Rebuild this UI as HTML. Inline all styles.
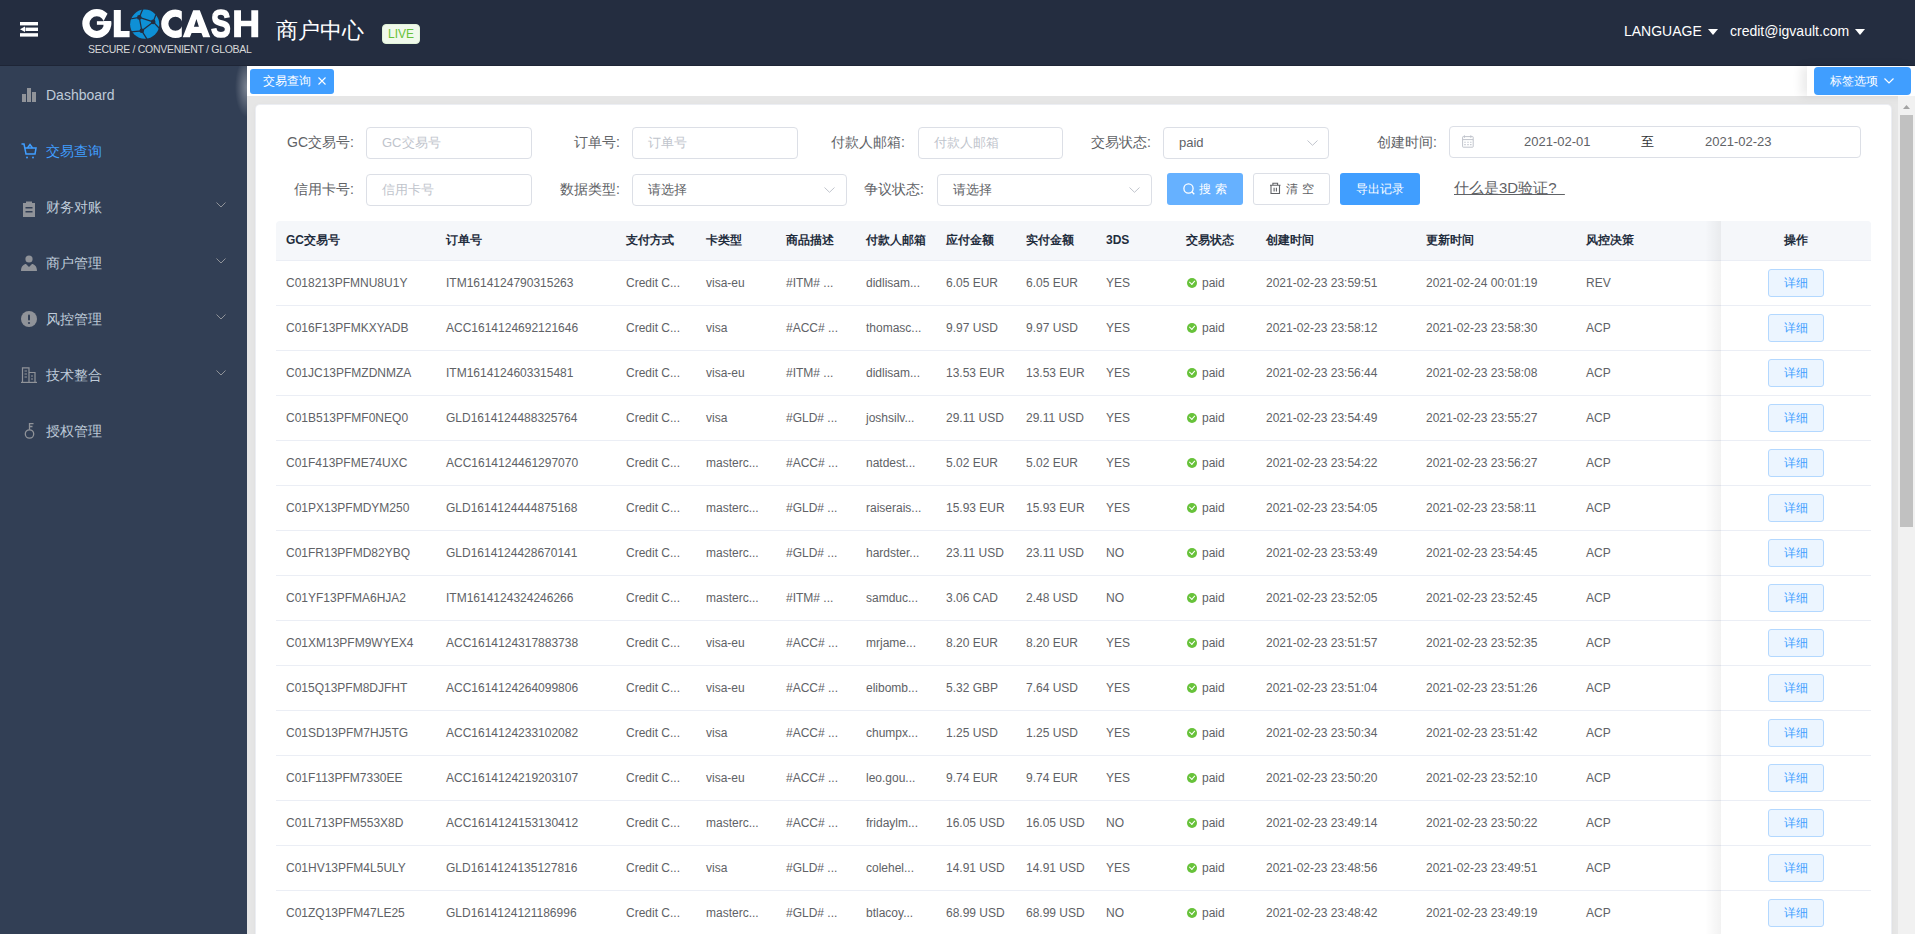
<!DOCTYPE html>
<html><head><meta charset="utf-8">
<style>
*{box-sizing:border-box;margin:0;padding:0}
html,body{width:1915px;height:934px;overflow:hidden;font-family:"Liberation Sans",sans-serif;background:#e6e6e6}
.abs{position:absolute}
#hd{position:absolute;left:0;top:0;width:1915px;height:66px;background:#242d40;border-bottom:1px solid #1e2536}
#sb{position:absolute;left:0;top:66px;width:247px;height:868px;background:#323f55}
.mi{position:absolute;left:0;width:247px;height:56px}
.mi .t{position:absolute;left:46px;top:0;line-height:56px;font-size:14px;color:#bfcbd9;white-space:nowrap}
.mi svg.ic{position:absolute}
.mi svg.ar{position:absolute;left:216px;top:23px}
#tb{position:absolute;left:247px;top:66px;width:1668px;height:30px;background:#fff}
#glow{position:absolute;left:235px;top:66px;width:12px;height:56px;background:radial-gradient(ellipse 12px 30px at 100% 38%,rgba(255,255,255,.36),rgba(255,255,255,0))}
.tag{position:absolute;left:3px;top:3px;width:84px;height:25px;background:#409eff;border-radius:3px;color:#fff;font-size:12px;line-height:25px;padding-left:13px;white-space:nowrap}
#tabopt{position:absolute;left:1807px;top:66px;width:108px;height:30px;background:#fff;box-shadow:-6px 0 10px rgba(0,0,0,.08)}
#tabopt .b{position:absolute;left:7px;top:1px;width:97px;height:28px;background:#409eff;border-radius:4px;color:#fff;font-size:12px;line-height:28px;padding-left:16px;white-space:nowrap}
#card{position:absolute;left:256px;top:105px;width:1635px;height:900px;background:#fff;border-radius:4px;box-shadow:0 0 0 1px #eceef3,0 1px 6px rgba(0,0,0,.05)}
.lbl{position:absolute;font-size:14px;color:#606266;line-height:30px;text-align:right;white-space:nowrap}
.inp{position:absolute;height:32px;border:1px solid #dcdfe6;border-radius:4px;background:#fff;font-size:13px;line-height:29px;padding-left:15px;color:#c0c4cc;white-space:nowrap}
.inp.v{color:#606266}
.inp svg.ch{position:absolute;top:12px}
.btn{position:absolute;height:32px;border-radius:3px;font-size:12px;line-height:32px;white-space:nowrap;text-align:center}
#sbar{position:absolute;left:1898px;top:96px;width:17px;height:838px;background:#f1f1f1}
#tbl{position:absolute;left:20px;top:116px;width:1595px;height:800px}
.thd{position:absolute;left:0;top:0;width:1595px;height:40px;background:#f5f7fa;border-bottom:1px solid #ebeef5;border-radius:4px 4px 0 0}
.h{position:absolute;top:0;line-height:39px;font-size:12px;font-weight:bold;color:#1f2d3d;white-space:nowrap}
.tr{position:absolute;left:0;width:1595px;height:45px;border-bottom:1px solid #ebeef5}
.c{position:absolute;top:0;line-height:44px;font-size:12px;color:#606266;white-space:nowrap}
.ok{display:inline-block;width:10.6px;height:10.6px;border-radius:50%;background:#67c23a;margin-left:0.7px;margin-right:4.7px;vertical-align:-1.3px;position:relative}
.ok:after{content:"";position:absolute;left:3.7px;top:1.7px;width:2.6px;height:4.4px;border:solid #fff;border-width:0 1.1px 1.1px 0;transform:rotate(42deg)}
.fx{position:absolute;left:1445px;top:0;width:150px;height:44px;background:#fff}
.fxh{position:absolute;left:1445px;top:0;width:150px;height:39px;background:#f5f7fa;border-radius:0 4px 0 0}
.shadow{position:absolute;left:1429px;top:0;width:16px;height:800px;background:linear-gradient(to right,rgba(0,0,0,0),rgba(0,0,0,.05))}
.btn-d{position:absolute;left:47px;top:8px;width:56px;height:28px;background:#ecf5ff;border:1px solid #b3d8ff;border-radius:3px;color:#409eff;font-size:12px;line-height:26px;text-align:center}
</style></head>
<body>
<div id="hd">
  <svg class="abs" style="left:20px;top:22px" width="18" height="15" viewBox="0 0 18 15">
    <rect x="0" y="0" width="18" height="3.4" fill="#fff"/>
    <rect x="5.5" y="5.6" width="12.5" height="3.4" fill="#fff"/>
    <path d="M0 7.3 L5 4.6 L5 10 Z" fill="#fff"/>
    <rect x="0" y="11.2" width="18" height="3.4" fill="#fff"/>
  </svg>
  <svg class="abs" style="left:0;top:0" width="270" height="60" viewBox="0 0 270 60">
    <defs>
      <mask id="mg" maskUnits="userSpaceOnUse" x="0" y="0" width="270" height="60"><rect x="0" y="0" width="270" height="60" fill="#fff"/><polygon points="103.5,21.2 107.2,14.2 120,6 120,21.2" fill="#000"/></mask>
      <clipPath id="cc"><rect x="150" y="0" width="31.8" height="60"/></clipPath>
    </defs>
    <circle cx="96.8" cy="23.6" r="10.9" fill="none" stroke="#fff" stroke-width="7.2" mask="url(#mg)"/>
    <rect x="96.9" y="21.2" width="14.2" height="3.6" fill="#fff"/>
    <rect x="103.6" y="21.2" width="7.5" height="5" fill="#fff"/>
    <path d="M113.8 9.9 H120.8 V31 H129.6 V37.2 H113.8 Z" fill="#fff"/>
    <circle cx="175.4" cy="23.8" r="10.6" fill="none" stroke="#fff" stroke-width="7.2" clip-path="url(#cc)"/>
    <path fill-rule="evenodd" d="M182.7 37.2 L193.2 10.2 L199.8 10.2 L210.3 37.2 L203.1 37.2 L201.4 32.9 L191.6 32.9 L189.9 37.2 Z M196.4 19 L198.9 26.8 L193.9 26.8 Z" fill="#fff"/>
    <path d="M234.1 10.2 H241 V20.8 H251.3 V10.2 H258.2 V37.2 H251.3 V26.3 H241 V37.2 H234.1 Z" fill="#fff"/>
    <g transform="translate(130,9.5)">
      <circle cx="14.7" cy="14.7" r="14.6" fill="#0e90d6"/>
      <g stroke="#242d40" stroke-width="1.25" fill="none" stroke-linecap="round">
        <path d="M9.3 7.9 L12.6 0 M9.3 7.9 L0 9.5 M9.3 7.9 L23.2 12.4 M9.3 7.9 L11.8 21.3 M23.2 12.4 L25.8 5.5 M23.2 12.4 L28.8 18.3 M11.8 21.3 L1 22.4 M11.8 21.3 L17 29.6 M11.8 21.3 L23.2 12.4"/>
      </g>
      <g fill="#242d40"><circle cx="9.3" cy="7.9" r="2.3"/><circle cx="23.2" cy="12.4" r="2.3"/><circle cx="11.8" cy="21.3" r="2.3"/></g>
    </g>
  </svg>
  <div class="abs" style="left:211.4px;top:1px;font-size:39.5px;font-weight:bold;color:#fff;line-height:44px;-webkit-text-stroke:1.6px #fff;transform:scaleX(0.75);transform-origin:0 0">S</div>
  <div class="abs" style="left:88px;top:42px;font-size:10.5px;color:#d8d8d8;line-height:14px;letter-spacing:-0.3px;white-space:nowrap">SECURE / CONVENIENT / GLOBAL</div>
  <div class="abs" style="left:276px;top:15px;font-size:22px;color:#fff;line-height:32px;white-space:nowrap">商户中心</div>
  <div class="abs" style="left:382px;top:24px;width:38px;height:20px;background:#f0f9eb;border:1px solid #e1f3d8;border-radius:4px;color:#67c23a;font-size:12px;line-height:18px;text-align:center">LIVE</div>
  <div class="abs" style="left:1624px;top:21px;font-size:14px;color:#fff;line-height:20px;white-space:nowrap">LANGUAGE</div>
  <svg class="abs" style="left:1708px;top:29px" width="10" height="6" viewBox="0 0 10 6"><path d="M0 0 L10 0 L5 6 Z" fill="#fff"/></svg>
  <div class="abs" style="left:1730px;top:21px;font-size:14px;color:#fff;line-height:20px;white-space:nowrap">credit@igvault.com</div>
  <svg class="abs" style="left:1855px;top:29px" width="10" height="6" viewBox="0 0 10 6"><path d="M0 0 L10 0 L5 6 Z" fill="#fff"/></svg>
</div>

<div id="sb">
  <div class="mi" style="top:1px">
    <svg class="ic" style="left:22px;top:21px" width="14" height="14" viewBox="0 0 14 14"><rect x="0" y="6" width="4" height="8" fill="#909399"/><rect x="5" y="0" width="4" height="14" fill="#909399"/><rect x="10" y="4" width="4" height="10" fill="#909399"/></svg>
    <span class="t">Dashboard</span>
  </div>
  <div class="mi" style="top:57px">
    <svg class="ic" style="left:21px;top:20px" width="16" height="16" viewBox="0 0 16 16" fill="none" stroke="#409eff" stroke-width="1.5"><path d="M0.5 1 L3 1 L5 11 L14 11 L15 5 L4 5"/><path d="M6.5 5 L9 1.5 L11.5 5"/><circle cx="6" cy="14.5" r="1" fill="#409eff" stroke="none"/><circle cx="12" cy="14.5" r="1" fill="#409eff" stroke="none"/></svg>
    <span class="t" style="color:#409eff">交易查询</span>
  </div>
  <div class="mi" style="top:113px">
    <svg class="ic" style="left:22px;top:22px" width="14" height="16" viewBox="0 0 14 16"><path d="M1 2 H4 V0.5 H10 V2 H13 V16 H1 Z" fill="#909399"/><rect x="3.5" y="6" width="7" height="1.5" fill="#323f55"/><rect x="3.5" y="10" width="7" height="1.5" fill="#323f55"/></svg>
    <span class="t">财务对账</span>
    <svg class="ar" width="10" height="6" viewBox="0 0 10 6"><path d="M0.5 0.5 L5 5 L9.5 0.5" fill="none" stroke="#909399" stroke-width="1"/></svg>
  </div>
  <div class="mi" style="top:169px">
    <svg class="ic" style="left:21px;top:20px" width="16" height="16" viewBox="0 0 16 16"><circle cx="8" cy="4" r="3.6" fill="#909399"/><path d="M0 16 C0 11 3 9 5 9 L8 12 L11 9 C13 9 16 11 16 16 Z" fill="#909399"/></svg>
    <span class="t">商户管理</span>
    <svg class="ar" width="10" height="6" viewBox="0 0 10 6"><path d="M0.5 0.5 L5 5 L9.5 0.5" fill="none" stroke="#909399" stroke-width="1"/></svg>
  </div>
  <div class="mi" style="top:225px">
    <svg class="ic" style="left:21px;top:20px" width="16" height="16" viewBox="0 0 16 16"><circle cx="8" cy="8" r="8" fill="#909399"/><rect x="7" y="3.5" width="2" height="6" rx="1" fill="#323f55"/><circle cx="8" cy="12" r="1.1" fill="#323f55"/></svg>
    <span class="t">风控管理</span>
    <svg class="ar" width="10" height="6" viewBox="0 0 10 6"><path d="M0.5 0.5 L5 5 L9.5 0.5" fill="none" stroke="#909399" stroke-width="1"/></svg>
  </div>
  <div class="mi" style="top:281px">
    <svg class="ic" style="left:21px;top:20px" width="16" height="16" viewBox="0 0 16 16" fill="none" stroke="#909399" stroke-width="1.2"><path d="M0 15.4 H16"/><path d="M1.5 15.4 V0.8 H8 V15.4"/><path d="M8 5.5 H14 V15.4"/><path d="M3.5 4 H6 M3.5 7 H6 M3.5 10 H6 M10 9 H12 M10 12 H12"/></svg>
    <span class="t">技术整合</span>
    <svg class="ar" width="10" height="6" viewBox="0 0 10 6"><path d="M0.5 0.5 L5 5 L9.5 0.5" fill="none" stroke="#909399" stroke-width="1"/></svg>
  </div>
  <div class="mi" style="top:337px">
    <svg class="ic" style="left:24px;top:20px" width="11" height="16" viewBox="0 0 11 16" fill="none" stroke="#909399" stroke-width="1.3"><circle cx="5.5" cy="11" r="4.2"/><path d="M5.5 6.8 V0.7 H9.5 M5.5 3.5 H8.5"/></svg>
    <span class="t">授权管理</span>
  </div>
</div>

<div id="glow"></div>
<div id="tb">
  <div class="tag">交易查询<svg style="position:absolute;left:68px;top:7.5px" width="8" height="8" viewBox="0 0 8 8"><path d="M0.5 0.5 L7.5 7.5 M7.5 0.5 L0.5 7.5" stroke="#fff" stroke-width="1.1"/></svg></div>
</div>
<div id="tabopt"><div class="b">标签选项<svg style="position:absolute;left:70px;top:11px" width="10" height="6" viewBox="0 0 10 6"><path d="M0.5 0.5 L5 5 L9.5 0.5" fill="none" stroke="#fff" stroke-width="1.2"/></svg></div></div>

<div id="sbar">
  <svg class="abs" style="left:5px;top:9px" width="7" height="4" viewBox="0 0 7 4"><path d="M0 4 L3.5 0 L7 4 Z" fill="#a3a3a3"/></svg>
  <div class="abs" style="left:2px;top:19px;width:13px;height:412px;background:#c1c1c1"></div>
</div>

<div id="card">
  <!-- row 1 -->
  <div class="lbl" style="left:0;width:98px;top:22px">GC交易号:</div>
  <div class="inp" style="left:110px;top:22px;width:166px">GC交易号</div>
  <div class="lbl" style="left:276px;width:88px;top:22px">订单号:</div>
  <div class="inp" style="left:376px;top:22px;width:166px">订单号</div>
  <div class="lbl" style="left:542px;width:107px;top:22px">付款人邮箱:</div>
  <div class="inp" style="left:662px;top:22px;width:145px">付款人邮箱</div>
  <div class="lbl" style="left:807px;width:88px;top:22px">交易状态:</div>
  <div class="inp v" style="left:907px;top:22px;width:166px">paid<svg class="ch" style="left:143px" width="11" height="6" viewBox="0 0 11 6"><path d="M0.5 0.5 L5.5 5.3 L10.5 0.5" fill="none" stroke="#c0c4cc" stroke-width="1"/></svg></div>
  <div class="lbl" style="left:1073px;width:108px;top:22px">创建时间:</div>
  <div class="inp v" style="left:1193px;top:21px;width:412px;padding:0">
    <svg class="abs" style="left:11px;top:8px" width="14" height="14" viewBox="0 0 14 14" fill="none" stroke="#c0c4cc" stroke-width="1"><rect x="1.6" y="1.6" width="10.6" height="10.6" rx="0.6"/><path d="M1.6 4.6 H12.2 M3.4 0.3 V2.8 M9.8 0.3 V2.8"/><path d="M3.3 7.3 H4.7 M6.3 7.3 H7.7 M9.1 7.3 H10.5 M3.3 9.6 H4.7 M6.3 9.6 H7.7 M9.1 9.6 H10.5" stroke-width="1.1"/></svg>
    <span class="abs" style="left:74px;top:0;line-height:30px">2021-02-01</span>
    <span class="abs" style="left:191px;top:0;line-height:30px;color:#303133">至</span>
    <span class="abs" style="left:255px;top:0;line-height:30px">2021-02-23</span>
  </div>
  <!-- row 2 -->
  <div class="lbl" style="left:0;width:98px;top:69px">信用卡号:</div>
  <div class="inp" style="left:110px;top:69px;width:166px">信用卡号</div>
  <div class="lbl" style="left:276px;width:88px;top:69px">数据类型:</div>
  <div class="inp v" style="left:376px;top:69px;width:215px">请选择<svg class="ch" style="left:191px" width="11" height="6" viewBox="0 0 11 6"><path d="M0.5 0.5 L5.5 5.3 L10.5 0.5" fill="none" stroke="#c0c4cc" stroke-width="1"/></svg></div>
  <div class="lbl" style="left:591px;width:77px;top:69px">争议状态:</div>
  <div class="inp v" style="left:681px;top:69px;width:215px">请选择<svg class="ch" style="left:191px" width="11" height="6" viewBox="0 0 11 6"><path d="M0.5 0.5 L5.5 5.3 L10.5 0.5" fill="none" stroke="#c0c4cc" stroke-width="1"/></svg></div>
  <div class="btn" style="left:911px;top:68px;width:76px;background:#66b1ff;color:#fff">
    <svg class="abs" style="left:16px;top:10px" width="12" height="12" viewBox="0 0 12 12" fill="none" stroke="#fff" stroke-width="1.3"><circle cx="5.5" cy="5.5" r="4.6"/><path d="M8.8 8.8 L11.3 11.3"/></svg>
    <span class="abs" style="left:32px;top:0;letter-spacing:4px">搜索</span></div>
  <div class="btn" style="left:997px;top:68px;width:77px;background:#fff;border:1px solid #dcdfe6;color:#606266;line-height:30px">
    <svg class="abs" style="left:15px;top:8px" width="12" height="13" viewBox="0 0 12 13" fill="none" stroke="#606266" stroke-width="1.1"><path d="M1 3.3 H11.5 M3.9 3.3 V1.2 H8.6 V3.3 M2 3.3 V11.5 H10.5 V3.3 M5.1 5.8 V9.6 M7.4 5.8 V9.6"/></svg>
    <span class="abs" style="left:32px;top:0;letter-spacing:4px">清空</span></div>
  <div class="btn" style="left:1084px;top:68px;width:80px;background:#409eff;color:#fff">导出记录</div>
  <div class="abs" style="left:1198px;top:67px;font-size:15px;line-height:32px;color:#606266;text-decoration:underline;white-space:nowrap">什么是3D验证?&nbsp;&nbsp;</div>

  <div id="tbl">
    <div class="thd"><span class="h" style="left:10px">GC交易号</span><span class="h" style="left:170px">订单号</span><span class="h" style="left:350px">支付方式</span><span class="h" style="left:430px">卡类型</span><span class="h" style="left:510px">商品描述</span><span class="h" style="left:590px">付款人邮箱</span><span class="h" style="left:670px">应付金额</span><span class="h" style="left:750px">实付金额</span><span class="h" style="left:830px">3DS</span><span class="h" style="left:910px">交易状态</span><span class="h" style="left:990px">创建时间</span><span class="h" style="left:1150px">更新时间</span><span class="h" style="left:1310px">风控决策</span></div>
    <div class="tr" style="top:40px"><span class="c" style="left:10px">C018213PFMNU8U1Y</span><span class="c" style="left:170px">ITM1614124790315263</span><span class="c" style="left:350px">Credit C...</span><span class="c" style="left:430px">visa-eu</span><span class="c" style="left:510px">#ITM# ...</span><span class="c" style="left:590px">didlisam...</span><span class="c" style="left:670px">6.05 EUR</span><span class="c" style="left:750px">6.05 EUR</span><span class="c" style="left:830px">YES</span><span class="c st" style="left:910px"><i class="ok"></i>paid</span><span class="c" style="left:990px">2021-02-23 23:59:51</span><span class="c" style="left:1150px">2021-02-24 00:01:19</span><span class="c" style="left:1310px">REV</span><div class="fx"><span class="btn-d">详细</span></div></div>
<div class="tr" style="top:85px"><span class="c" style="left:10px">C016F13PFMKXYADB</span><span class="c" style="left:170px">ACC1614124692121646</span><span class="c" style="left:350px">Credit C...</span><span class="c" style="left:430px">visa</span><span class="c" style="left:510px">#ACC# ...</span><span class="c" style="left:590px">thomasc...</span><span class="c" style="left:670px">9.97 USD</span><span class="c" style="left:750px">9.97 USD</span><span class="c" style="left:830px">YES</span><span class="c st" style="left:910px"><i class="ok"></i>paid</span><span class="c" style="left:990px">2021-02-23 23:58:12</span><span class="c" style="left:1150px">2021-02-23 23:58:30</span><span class="c" style="left:1310px">ACP</span><div class="fx"><span class="btn-d">详细</span></div></div>
<div class="tr" style="top:130px"><span class="c" style="left:10px">C01JC13PFMZDNMZA</span><span class="c" style="left:170px">ITM1614124603315481</span><span class="c" style="left:350px">Credit C...</span><span class="c" style="left:430px">visa-eu</span><span class="c" style="left:510px">#ITM# ...</span><span class="c" style="left:590px">didlisam...</span><span class="c" style="left:670px">13.53 EUR</span><span class="c" style="left:750px">13.53 EUR</span><span class="c" style="left:830px">YES</span><span class="c st" style="left:910px"><i class="ok"></i>paid</span><span class="c" style="left:990px">2021-02-23 23:56:44</span><span class="c" style="left:1150px">2021-02-23 23:58:08</span><span class="c" style="left:1310px">ACP</span><div class="fx"><span class="btn-d">详细</span></div></div>
<div class="tr" style="top:175px"><span class="c" style="left:10px">C01B513PFMF0NEQ0</span><span class="c" style="left:170px">GLD1614124488325764</span><span class="c" style="left:350px">Credit C...</span><span class="c" style="left:430px">visa</span><span class="c" style="left:510px">#GLD# ...</span><span class="c" style="left:590px">joshsilv...</span><span class="c" style="left:670px">29.11 USD</span><span class="c" style="left:750px">29.11 USD</span><span class="c" style="left:830px">YES</span><span class="c st" style="left:910px"><i class="ok"></i>paid</span><span class="c" style="left:990px">2021-02-23 23:54:49</span><span class="c" style="left:1150px">2021-02-23 23:55:27</span><span class="c" style="left:1310px">ACP</span><div class="fx"><span class="btn-d">详细</span></div></div>
<div class="tr" style="top:220px"><span class="c" style="left:10px">C01F413PFME74UXC</span><span class="c" style="left:170px">ACC1614124461297070</span><span class="c" style="left:350px">Credit C...</span><span class="c" style="left:430px">masterc...</span><span class="c" style="left:510px">#ACC# ...</span><span class="c" style="left:590px">natdest...</span><span class="c" style="left:670px">5.02 EUR</span><span class="c" style="left:750px">5.02 EUR</span><span class="c" style="left:830px">YES</span><span class="c st" style="left:910px"><i class="ok"></i>paid</span><span class="c" style="left:990px">2021-02-23 23:54:22</span><span class="c" style="left:1150px">2021-02-23 23:56:27</span><span class="c" style="left:1310px">ACP</span><div class="fx"><span class="btn-d">详细</span></div></div>
<div class="tr" style="top:265px"><span class="c" style="left:10px">C01PX13PFMDYM250</span><span class="c" style="left:170px">GLD1614124444875168</span><span class="c" style="left:350px">Credit C...</span><span class="c" style="left:430px">masterc...</span><span class="c" style="left:510px">#GLD# ...</span><span class="c" style="left:590px">raiserais...</span><span class="c" style="left:670px">15.93 EUR</span><span class="c" style="left:750px">15.93 EUR</span><span class="c" style="left:830px">YES</span><span class="c st" style="left:910px"><i class="ok"></i>paid</span><span class="c" style="left:990px">2021-02-23 23:54:05</span><span class="c" style="left:1150px">2021-02-23 23:58:11</span><span class="c" style="left:1310px">ACP</span><div class="fx"><span class="btn-d">详细</span></div></div>
<div class="tr" style="top:310px"><span class="c" style="left:10px">C01FR13PFMD82YBQ</span><span class="c" style="left:170px">GLD1614124428670141</span><span class="c" style="left:350px">Credit C...</span><span class="c" style="left:430px">masterc...</span><span class="c" style="left:510px">#GLD# ...</span><span class="c" style="left:590px">hardster...</span><span class="c" style="left:670px">23.11 USD</span><span class="c" style="left:750px">23.11 USD</span><span class="c" style="left:830px">NO</span><span class="c st" style="left:910px"><i class="ok"></i>paid</span><span class="c" style="left:990px">2021-02-23 23:53:49</span><span class="c" style="left:1150px">2021-02-23 23:54:45</span><span class="c" style="left:1310px">ACP</span><div class="fx"><span class="btn-d">详细</span></div></div>
<div class="tr" style="top:355px"><span class="c" style="left:10px">C01YF13PFMA6HJA2</span><span class="c" style="left:170px">ITM1614124324246266</span><span class="c" style="left:350px">Credit C...</span><span class="c" style="left:430px">masterc...</span><span class="c" style="left:510px">#ITM# ...</span><span class="c" style="left:590px">samduc...</span><span class="c" style="left:670px">3.06 CAD</span><span class="c" style="left:750px">2.48 USD</span><span class="c" style="left:830px">NO</span><span class="c st" style="left:910px"><i class="ok"></i>paid</span><span class="c" style="left:990px">2021-02-23 23:52:05</span><span class="c" style="left:1150px">2021-02-23 23:52:45</span><span class="c" style="left:1310px">ACP</span><div class="fx"><span class="btn-d">详细</span></div></div>
<div class="tr" style="top:400px"><span class="c" style="left:10px">C01XM13PFM9WYEX4</span><span class="c" style="left:170px">ACC1614124317883738</span><span class="c" style="left:350px">Credit C...</span><span class="c" style="left:430px">visa-eu</span><span class="c" style="left:510px">#ACC# ...</span><span class="c" style="left:590px">mrjame...</span><span class="c" style="left:670px">8.20 EUR</span><span class="c" style="left:750px">8.20 EUR</span><span class="c" style="left:830px">YES</span><span class="c st" style="left:910px"><i class="ok"></i>paid</span><span class="c" style="left:990px">2021-02-23 23:51:57</span><span class="c" style="left:1150px">2021-02-23 23:52:35</span><span class="c" style="left:1310px">ACP</span><div class="fx"><span class="btn-d">详细</span></div></div>
<div class="tr" style="top:445px"><span class="c" style="left:10px">C015Q13PFM8DJFHT</span><span class="c" style="left:170px">ACC1614124264099806</span><span class="c" style="left:350px">Credit C...</span><span class="c" style="left:430px">visa-eu</span><span class="c" style="left:510px">#ACC# ...</span><span class="c" style="left:590px">elibomb...</span><span class="c" style="left:670px">5.32 GBP</span><span class="c" style="left:750px">7.64 USD</span><span class="c" style="left:830px">YES</span><span class="c st" style="left:910px"><i class="ok"></i>paid</span><span class="c" style="left:990px">2021-02-23 23:51:04</span><span class="c" style="left:1150px">2021-02-23 23:51:26</span><span class="c" style="left:1310px">ACP</span><div class="fx"><span class="btn-d">详细</span></div></div>
<div class="tr" style="top:490px"><span class="c" style="left:10px">C01SD13PFM7HJ5TG</span><span class="c" style="left:170px">ACC1614124233102082</span><span class="c" style="left:350px">Credit C...</span><span class="c" style="left:430px">visa</span><span class="c" style="left:510px">#ACC# ...</span><span class="c" style="left:590px">chumpx...</span><span class="c" style="left:670px">1.25 USD</span><span class="c" style="left:750px">1.25 USD</span><span class="c" style="left:830px">YES</span><span class="c st" style="left:910px"><i class="ok"></i>paid</span><span class="c" style="left:990px">2021-02-23 23:50:34</span><span class="c" style="left:1150px">2021-02-23 23:51:42</span><span class="c" style="left:1310px">ACP</span><div class="fx"><span class="btn-d">详细</span></div></div>
<div class="tr" style="top:535px"><span class="c" style="left:10px">C01F113PFM7330EE</span><span class="c" style="left:170px">ACC1614124219203107</span><span class="c" style="left:350px">Credit C...</span><span class="c" style="left:430px">visa-eu</span><span class="c" style="left:510px">#ACC# ...</span><span class="c" style="left:590px">leo.gou...</span><span class="c" style="left:670px">9.74 EUR</span><span class="c" style="left:750px">9.74 EUR</span><span class="c" style="left:830px">YES</span><span class="c st" style="left:910px"><i class="ok"></i>paid</span><span class="c" style="left:990px">2021-02-23 23:50:20</span><span class="c" style="left:1150px">2021-02-23 23:52:10</span><span class="c" style="left:1310px">ACP</span><div class="fx"><span class="btn-d">详细</span></div></div>
<div class="tr" style="top:580px"><span class="c" style="left:10px">C01L713PFM553X8D</span><span class="c" style="left:170px">ACC1614124153130412</span><span class="c" style="left:350px">Credit C...</span><span class="c" style="left:430px">masterc...</span><span class="c" style="left:510px">#ACC# ...</span><span class="c" style="left:590px">fridaylm...</span><span class="c" style="left:670px">16.05 USD</span><span class="c" style="left:750px">16.05 USD</span><span class="c" style="left:830px">NO</span><span class="c st" style="left:910px"><i class="ok"></i>paid</span><span class="c" style="left:990px">2021-02-23 23:49:14</span><span class="c" style="left:1150px">2021-02-23 23:50:22</span><span class="c" style="left:1310px">ACP</span><div class="fx"><span class="btn-d">详细</span></div></div>
<div class="tr" style="top:625px"><span class="c" style="left:10px">C01HV13PFM4L5ULY</span><span class="c" style="left:170px">GLD1614124135127816</span><span class="c" style="left:350px">Credit C...</span><span class="c" style="left:430px">visa</span><span class="c" style="left:510px">#GLD# ...</span><span class="c" style="left:590px">colehel...</span><span class="c" style="left:670px">14.91 USD</span><span class="c" style="left:750px">14.91 USD</span><span class="c" style="left:830px">YES</span><span class="c st" style="left:910px"><i class="ok"></i>paid</span><span class="c" style="left:990px">2021-02-23 23:48:56</span><span class="c" style="left:1150px">2021-02-23 23:49:51</span><span class="c" style="left:1310px">ACP</span><div class="fx"><span class="btn-d">详细</span></div></div>
<div class="tr" style="top:670px"><span class="c" style="left:10px">C01ZQ13PFM47LE25</span><span class="c" style="left:170px">GLD1614124121186996</span><span class="c" style="left:350px">Credit C...</span><span class="c" style="left:430px">masterc...</span><span class="c" style="left:510px">#GLD# ...</span><span class="c" style="left:590px">btlacoy...</span><span class="c" style="left:670px">68.99 USD</span><span class="c" style="left:750px">68.99 USD</span><span class="c" style="left:830px">NO</span><span class="c st" style="left:910px"><i class="ok"></i>paid</span><span class="c" style="left:990px">2021-02-23 23:48:42</span><span class="c" style="left:1150px">2021-02-23 23:49:19</span><span class="c" style="left:1310px">ACP</span><div class="fx"><span class="btn-d">详细</span></div></div>
    <div class="shadow"></div>
    <div class="fxh"><span class="h" style="left:63px">操作</span></div>
  </div>
</div>
</body></html>
